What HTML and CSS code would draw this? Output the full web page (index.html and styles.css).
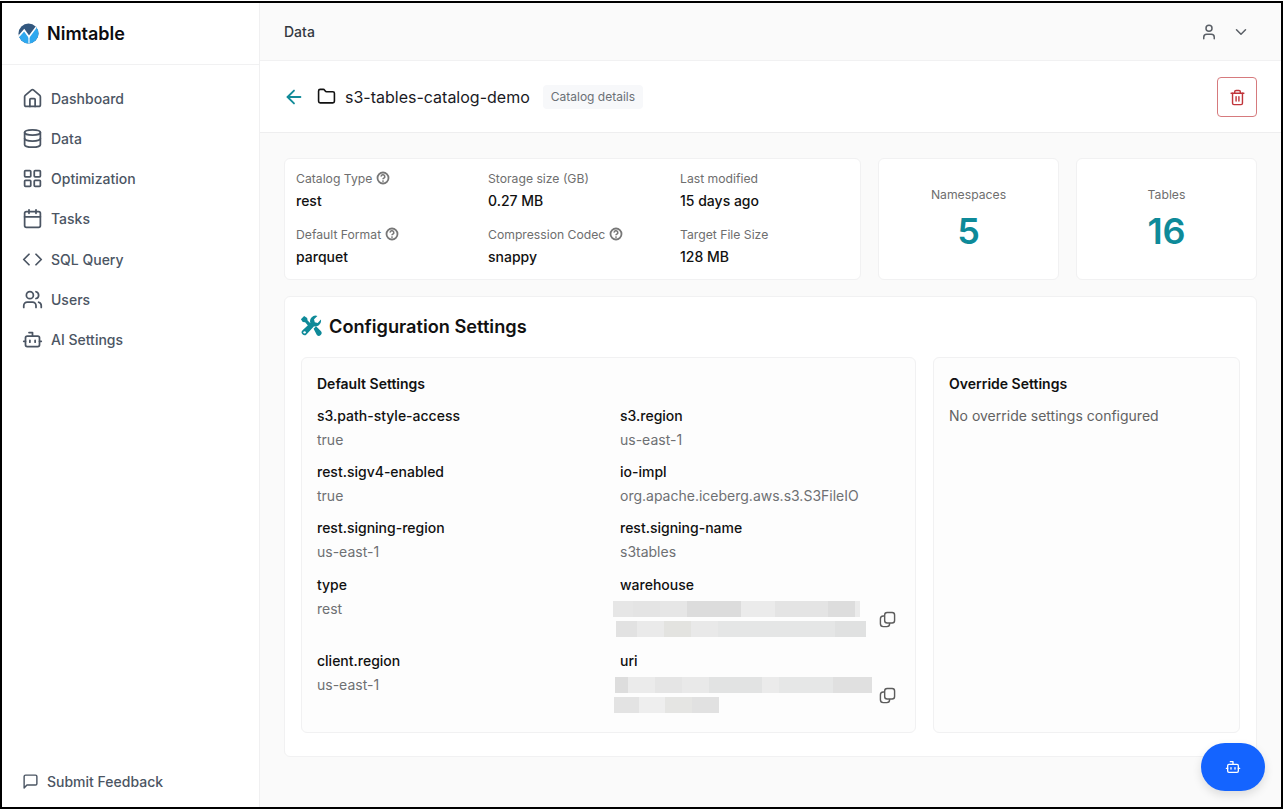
FILE: index.html
```html
<!DOCTYPE html>
<html lang="en">
<head>
<meta charset="utf-8">
<title>Nimtable</title>
<link rel="stylesheet" href="styles.css">
</head>
<body>
<svg class="defs" width="0" height="0" aria-hidden="true">
  <symbol id="help" viewBox="0 0 14 14">
    <circle cx="7" cy="7" r="5.5" fill="none" stroke="currentColor" stroke-width="1.800"/>
    <path d="M5.200 5.600a1.800 1.800 0 1 1 2.700 1.500c-.6.350-.9.600-.9 1.200" fill="none" stroke="currentColor" stroke-width="1.600"/>
    <circle cx="7" cy="10.100" r=".9" fill="currentColor"/>
  </symbol>
  <symbol id="copy" viewBox="0 0 24 24">
    <rect x="8" y="2" width="14" height="15" rx="3.500" fill="none" stroke="currentColor" stroke-width="2"/>
    <path d="M8 7H6a4 4 0 0 0-4 4v7a4 4 0 0 0 4 4h5a4 4 0 0 0 4-4v-1" fill="none" stroke="currentColor" stroke-width="2"/>
  </symbol>
  <clipPath id="logo-clip"><circle cx="11" cy="11" r="10.500"/></clipPath>
</svg>
<div class="frame">
  <aside class="sidebar">
    <div class="brand">
      <svg class="logo" viewBox="0 0 22 22">
        <g clip-path="url(#logo-clip)">
          <rect width="22" height="22" fill="#33587f"/>
          <path d="M0 15 6.500 7.500l5 7L20 3l2 2v17H0z" fill="#2ea8ef"/>
          <path d="M0 15 6.500 7.500l5 7L20 3" fill="none" stroke="#fff" stroke-width="1.700"/>
          <path d="M11.500 14.500V22" stroke="#fff" stroke-width="1.200"/>
        </g>
      </svg>
      <span class="brand-name">Nimtable</span>
    </div>
    <nav class="nav">
      <a class="nav-item"><svg class="nav-icon" viewBox="0 0 24 24"><path d="M15 21v-8a1 1 0 0 0-1-1h-4a1 1 0 0 0-1 1v8"/><path d="M3 10a2 2 0 0 1 .7-1.500l7-6a2 2 0 0 1 2.600 0l7 6a2 2 0 0 1 .7 1.500v9a2 2 0 0 1-2 2H5a2 2 0 0 1-2-2z"/></svg>Dashboard</a>
      <a class="nav-item"><svg class="nav-icon" viewBox="0 0 24 24"><ellipse cx="12" cy="5" rx="9" ry="3"/><path d="M3 5v14a9 3 0 0 0 18 0V5"/><path d="M3 12a9 3 0 0 0 18 0"/></svg>Data</a>
      <a class="nav-item"><svg class="nav-icon" viewBox="0 0 24 24"><rect x="3" y="3" width="7" height="7" rx="1"/><rect x="14" y="3" width="7" height="7" rx="1"/><rect x="14" y="14" width="7" height="7" rx="1"/><rect x="3" y="14" width="7" height="7" rx="1"/></svg>Optimization</a>
      <a class="nav-item"><svg class="nav-icon" viewBox="0 0 24 24"><path d="M8 2v4"/><path d="M16 2v4"/><rect x="3" y="4" width="18" height="18" rx="2"/><path d="M3 10h18"/></svg>Tasks</a>
      <a class="nav-item"><svg class="nav-icon" viewBox="0 0 24 24"><path d="m16 18 6-6-6-6"/><path d="m8 6-6 6 6 6"/></svg>SQL Query</a>
      <a class="nav-item"><svg class="nav-icon" viewBox="0 0 24 24"><path d="M16 21v-2a4 4 0 0 0-4-4H6a4 4 0 0 0-4 4v2"/><circle cx="9" cy="7" r="4"/><path d="M22 21v-2a4 4 0 0 0-3-3.870"/><path d="M16 3.130a4 4 0 0 1 0 7.750"/></svg>Users</a>
      <a class="nav-item"><svg class="nav-icon" viewBox="0 0 24 24"><path d="M12 8V4H8"/><rect x="4" y="8" width="16" height="12" rx="2"/><path d="M2 14h2"/><path d="M20 14h2"/><path d="M15 13v2"/><path d="M9 13v2"/></svg>AI Settings</a>
    </nav>
    <a class="feedback"><svg class="feedback-icon" viewBox="0 0 24 24"><path d="M21 15a2 2 0 0 1-2 2H7l-4 4V5a2 2 0 0 1 2-2h14a2 2 0 0 1 2 2z"/></svg>Submit Feedback</a>
  </aside>
  <main class="main">
    <header class="topbar">
      <span class="topbar-title">Data</span>
      <div class="topbar-actions">
        <svg class="top-icon" viewBox="0 0 24 24"><path d="M19 21v-2a4 4 0 0 0-4-4H9a4 4 0 0 0-4 4v2"/><circle cx="12" cy="7" r="4"/></svg>
        <svg class="top-icon" viewBox="0 0 24 24"><path d="m6 9 6 6 6-6"/></svg>
      </div>
    </header>
    <section class="pagehead">
      <div class="pagehead-left">
        <svg class="back-icon" viewBox="0 0 24 24"><path d="m12 19-7-7 7-7"/><path d="M19 12H5"/></svg>
        <svg class="folder-icon" viewBox="0 0 24 24"><path d="M20 20a2 2 0 0 0 2-2V8a2 2 0 0 0-2-2h-7.900a2 2 0 0 1-1.690-.9L9.600 3.900A2 2 0 0 0 7.930 3H4a2 2 0 0 0-2 2v13a2 2 0 0 0 2 2Z"/></svg>
        <h1 class="page-title">s3-tables-catalog-demo</h1>
        <span class="badge">Catalog details</span>
      </div>
      <button class="delete-btn" aria-label="Delete"><svg class="trash-icon" viewBox="0 0 24 24"><path d="M3 6h18"/><path d="M19 6v14a2 2 0 0 1-2 2H7a2 2 0 0 1-2-2V6"/><path d="M8 6V4a2 2 0 0 1 2-2h4a2 2 0 0 1 2 2v2"/><path d="M10 11v6"/><path d="M14 11v6"/></svg></button>
    </section>
    <div class="content">
      <div class="stats">
        <div class="card info-card">
          <div class="info"><div class="info-label">Catalog Type <svg class="help"><use href="#help"/></svg></div><div class="info-value">rest</div></div>
          <div class="info"><div class="info-label">Storage size (GB)</div><div class="info-value">0.27 MB</div></div>
          <div class="info"><div class="info-label">Last modified</div><div class="info-value">15 days ago</div></div>
          <div class="info"><div class="info-label">Default Format <svg class="help"><use href="#help"/></svg></div><div class="info-value">parquet</div></div>
          <div class="info"><div class="info-label">Compression Codec <svg class="help"><use href="#help"/></svg></div><div class="info-value">snappy</div></div>
          <div class="info"><div class="info-label">Target File Size</div><div class="info-value">128 MB</div></div>
        </div>
        <div class="card count-card"><div class="count-label">Namespaces</div><div class="count-value">5</div></div>
        <div class="card count-card"><div class="count-label">Tables</div><div class="count-value">16</div></div>
      </div>
      <section class="card config">
        <h2 class="config-title">
          <svg class="tools-icon" viewBox="0 0 24 24"><path d="M1 4.500 4.500 1l3.300 2.200.5 2.800 4.700 4.700-2.700 2.700L5.600 8 3 7.600z"/><path d="M23 6.500a6 6 0 0 1-7.700 5.700L7.300 20.900a3.100 3.100 0 0 1-4.600.1 3.100 3.100 0 0 1 .1-4.400l8.500-8a6 6 0 0 1 7.700-7.600l-3.700 3.700.8 3.200 3.200.8 3.500-3.700q.2.700.2 1.500z"/><path d="m14.800 15 2.700-2.700 5.200 5.200a3 3 0 0 1-.1 4.200 3 3 0 0 1-4.200.1z"/><circle cx="5" cy="18.900" r="1.300" fill="#fff"/></svg>
          Configuration Settings
        </h2>
        <div class="config-panels">
          <div class="panel">
            <h3 class="panel-title">Default Settings</h3>
            <div class="settings">
              <div class="setting"><div class="setting-key">s3.path-style-access</div><div class="setting-val">true</div></div>
              <div class="setting"><div class="setting-key">s3.region</div><div class="setting-val">us-east-1</div></div>
              <div class="setting"><div class="setting-key">rest.sigv4-enabled</div><div class="setting-val">true</div></div>
              <div class="setting"><div class="setting-key">io-impl</div><div class="setting-val">org.apache.iceberg.aws.s3.S3FileIO</div></div>
              <div class="setting"><div class="setting-key">rest.signing-region</div><div class="setting-val">us-east-1</div></div>
              <div class="setting"><div class="setting-key">rest.signing-name</div><div class="setting-val">s3tables</div></div>
              <div class="setting"><div class="setting-key">type</div><div class="setting-val">rest</div></div>
              <div class="setting">
                <div class="setting-key">warehouse</div>
                <div class="redacted-row">
                  <div class="redacted-lines"><div class="blur blur-w1"></div><div class="blur blur-w2"></div></div>
                  <svg class="copy"><use href="#copy"/></svg>
                </div>
              </div>
              <div class="setting"><div class="setting-key">client.region</div><div class="setting-val">us-east-1</div></div>
              <div class="setting">
                <div class="setting-key">uri</div>
                <div class="redacted-row">
                  <div class="redacted-lines"><div class="blur blur-u1"></div><div class="blur blur-u2"></div></div>
                  <svg class="copy"><use href="#copy"/></svg>
                </div>
              </div>
            </div>
          </div>
          <div class="panel">
            <h3 class="panel-title">Override Settings</h3>
            <p class="panel-empty">No override settings configured</p>
          </div>
        </div>
      </section>
    </div>
    <button class="fab" aria-label="AI assistant"><svg class="fab-icon" viewBox="0 0 24 24"><path d="M12 8V4H8"/><rect x="4" y="8" width="16" height="12" rx="2"/><path d="M2 14h2"/><path d="M20 14h2"/><path d="M15 13v2"/><path d="M9 13v2"/></svg></button>
  </main>
</div>
</body>
</html>
```
FILE: styles.css
```css
* { box-sizing: border-box; }
html, body { margin: 0; padding: 0; background: #fff; }
body {
  width: 1284px;
  height: 810px;
  overflow: hidden;
  padding: 1px 1px 1px 0;
  font-family: Inter, "Liberation Sans", sans-serif;
  color: #111;
}
.defs { position: absolute; }
.frame {
  display: flex;
  width: 100%;
  height: 100%;
  border: 2px solid #000;
  overflow: hidden;
}

/* Sidebar */
.sidebar {
  width: 258px;
  flex: none;
  display: flex;
  flex-direction: column;
  background: #fff;
  border-right: 1px solid #f0f0f1;
}
.brand {
  height: 62px;
  flex: none;
  display: flex;
  align-items: center;
  gap: 8px;
  padding: 0 0 0 16px;
  border-bottom: 1px solid #f1f1f2;
}
.logo { width: 21px; height: 21px; }
.brand-name { font-size: 18px; font-weight: 600; color: #0c0c10; }
.nav {
  display: flex;
  flex-direction: column;
  padding: 13.300px 0 0 20px;
}
.nav-item {
  height: 40.200px;
  display: flex;
  align-items: center;
  gap: 8px;
  font-size: 14px;
  font-weight: 500;
  color: #4b5563;
}
.nav-icon {
  width: 21px;
  height: 21px;
  flex: none;
  fill: none;
  stroke: #4b5563;
  stroke-width: 2;
  stroke-linecap: round;
  stroke-linejoin: round;
}
.feedback {
  margin-top: auto;
  height: 52px;
  display: flex;
  align-items: center;
  gap: 8px;
  padding-left: 20px;
  font-size: 14px;
  font-weight: 500;
  color: #4b5563;
}
.feedback-icon {
  width: 17px;
  height: 17px;
  fill: none;
  stroke: #4b5563;
  stroke-width: 2;
  stroke-linejoin: round;
}

/* Main */
.main {
  position: relative;
  flex: 1;
  min-width: 0;
  display: flex;
  flex-direction: column;
  background: #fafafa;
}
.topbar {
  height: 57px;
  flex: none;
  display: flex;
  align-items: center;
  justify-content: space-between;
  padding: 0 31px 0 24px;
  background: #fafafa;
}
.topbar-title { font-size: 14px; font-weight: 500; color: #33383f; }
.topbar-actions { display: flex; align-items: center; gap: 14px; }
.top-icon {
  width: 18px;
  height: 18px;
  fill: none;
  stroke: #5a5f66;
  stroke-width: 2;
  stroke-linecap: round;
  stroke-linejoin: round;
}
.pagehead {
  height: 73px;
  flex: none;
  display: flex;
  align-items: center;
  justify-content: space-between;
  padding: 1px 24px 0;
  background: #fff;
  border-top: 1px solid #f1f1f2;
  border-bottom: 1px solid #eeeeef;
}
.pagehead-left { display: flex; align-items: center; margin-top: -1px; }
.back-icon {
  width: 22px;
  height: 22px;
  margin-left: -1px;
  fill: none;
  stroke: #128b99;
  stroke-width: 2;
  stroke-linecap: round;
  stroke-linejoin: round;
}
.folder-icon {
  width: 19px;
  height: 19px;
  margin-left: 12px;
  fill: none;
  stroke: #111;
  stroke-width: 2;
  stroke-linecap: round;
  stroke-linejoin: round;
}
.page-title { margin: 0 0 0 9px; font-size: 16px; font-weight: 400; color: #1a1a1f; }
.badge {
  margin-left: 13px;
  padding: 0 8px;
  height: 24px;
  display: flex;
  align-items: center;
  border-radius: 4px;
  background: #f7f8fa;
  font-size: 12px;
  font-weight: 400;
  color: #6b7076;
}
.delete-btn {
  width: 40px;
  height: 40px;
  display: flex;
  align-items: center;
  justify-content: center;
  padding: 0;
  background: #fff;
  border: 1px solid #d67a7d;
  border-radius: 4px;
}
.trash-icon {
  width: 17px;
  height: 17px;
  fill: none;
  stroke: #c0343a;
  stroke-width: 2;
  stroke-linecap: round;
  stroke-linejoin: round;
}
.content {
  flex: 1;
  display: flex;
  flex-direction: column;
  gap: 16px;
  padding: 25px 24px 0;
}
.stats { display: flex; gap: 17px; }
.card {
  background: #fff;
  border: 1px solid #f1f1f2;
  border-radius: 6px;
}
.info-card {
  width: 577px;
  height: 122px;
  display: grid;
  grid-template-columns: repeat(3, 192px);
  grid-auto-rows: 56px;
  padding: 8px 11px;
}
.info-label {
  display: flex;
  align-items: center;
  gap: 4px;
  height: 22px;
  font-size: 12.200px;
  color: #6e6e6e;
}
.help { width: 14px; height: 14px; color: #777; }
.info-value { height: 22px; line-height: 23px; font-size: 14px; font-weight: 500; color: #111; }
.count-card {
  width: 181px;
  height: 122px;
  display: flex;
  flex-direction: column;
  align-items: center;
  padding-top: 26px;
}
.count-label { font-size: 12.200px; color: #6e6e6e; line-height: 20px; }
.count-value { font-size: 36px; font-weight: 600; line-height: 44px; color: #0e8a99; margin-top: 4px; }

/* Configuration */
.config { height: 461px; padding: 16px; }
.config-title {
  display: flex;
  align-items: center;
  gap: 7px;
  height: 26px;
  margin: 0 0 18px;
  font-size: 18.200px;
  font-weight: 600;
  color: #111;
}
.tools-icon { width: 22px; height: 22px; margin-left: -1px; fill: #0e8a99; flex: none; }
.config-panels { display: grid; grid-template-columns: 615px 307px; gap: 17px; }
.panel {
  height: 376px;
  padding: 16px 16px 16px 15px;
  background: #fdfdfd;
  border: 1px solid #f1f1f2;
  border-radius: 6px;
}
.panel-title { margin: 0; height: 20px; line-height: 20px; font-size: 14px; font-weight: 600; color: #111; }
.panel-empty { margin: 10px 0 0; line-height: 24px; font-size: 14px; color: #626262; }
.settings {
  display: grid;
  grid-template-columns: 303px 1fr;
  row-gap: 8.200px;
  margin-top: 10px;
}
.setting-key { height: 24px; line-height: 24px; font-size: 14px; font-weight: 500; color: #111; }
.setting-val { height: 24px; line-height: 24px; font-size: 14px; color: #6e7073; }
.redacted-row { display: flex; align-items: center; height: 44px; }
.redacted-lines { display: flex; flex-direction: column; gap: 4px; width: 259px; flex: none; }
.blur { height: 16px; }
.blur-w1 {
  width: 247px;
  margin-left: -7px;
  background: linear-gradient(90deg, #e6e6e6 0 20px, #e4e4e4 20px 47px, #e6e6e6 47px 74px, #dcdcdc 74px 128px, #ebebeb 128px 162px, #e4e4e4 162px 215px, #dddddd 215px 242px, #ebebeb 242px);
}
.blur-w2 {
  width: 250px;
  margin-left: -4px;
  background: linear-gradient(90deg, #e2e2e2 0 21px, #eaeaea 21px 48px, #e3e3e0 48px 75px, #e9e9e9 75px 102px, #e5e6e6 102px 219px, #e0e1e1 219px);
}
.blur-u1 {
  width: 257px;
  margin-left: -5px;
  background: linear-gradient(90deg, #dddddd 0 13px, #ebebeb 13px 40px, #e5e5e5 40px 67px, #e9e9e9 67px 94px, #e2e3e3 94px 147px, #ebebeb 147px 164px, #e6e7e7 164px 218px, #e0e0e0 218px);
}
.blur-u2 {
  width: 105px;
  margin-left: -6px;
  background: linear-gradient(90deg, #e3e3e3 0 25px, #eeeeee 25px 51px, #e5e5e3 51px 78px, #e1e1e1 78px);
}
.copy { width: 17px; height: 17px; margin-top: 2px; color: #5c5c5c; flex: none; }

.fab {
  position: absolute;
  right: 16px;
  bottom: 16px;
  width: 64px;
  height: 48px;
  display: flex;
  align-items: center;
  justify-content: center;
  padding: 0;
  background: #1464ff;
  border: none;
  border-radius: 24px;
  box-shadow: 0 4px 10px rgba(0, 0, 0, .12);
}
.fab-icon {
  width: 16px;
  height: 16px;
  fill: none;
  stroke: #fff;
  stroke-width: 2;
  stroke-linecap: round;
  stroke-linejoin: round;
}
```
